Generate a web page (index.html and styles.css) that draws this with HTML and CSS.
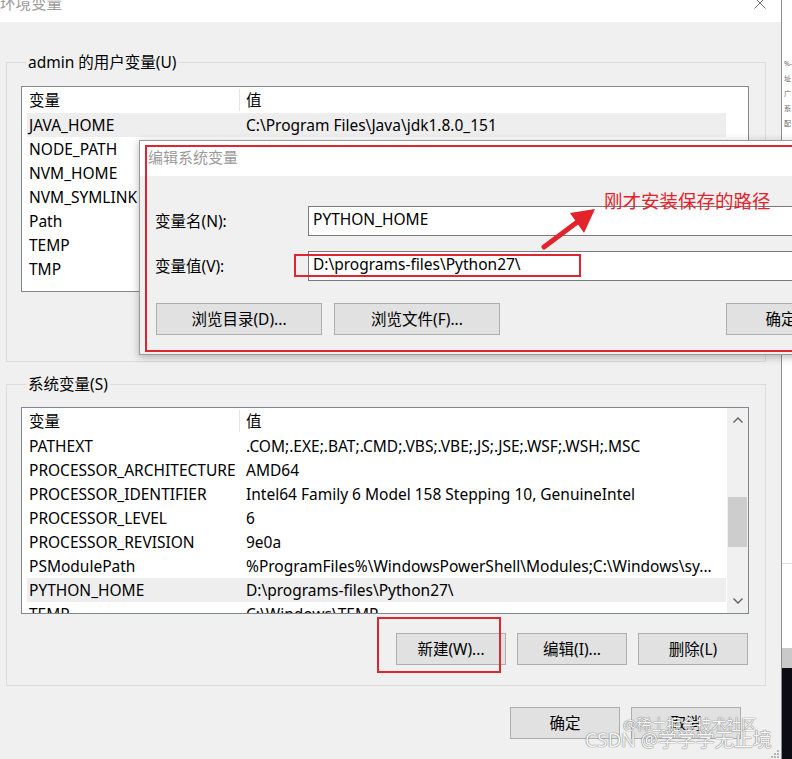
FILE: index.html
```html
<!DOCTYPE html>
<html lang="zh-CN">
<head>
<meta charset="utf-8">
<title>环境变量</title>
<link rel="stylesheet" href="styles.css">
</head>
<body>
<div class="screen">
  <div class="envwin">
    <div class="titlebar">
      <span class="title">环境变量</span>
      <svg class="close" width="12" height="12" viewBox="0 0 12 12"><path d="M0.5 0.5 L11.5 11.5 M11.5 0.5 L0.5 11.5" stroke="#6e6e6e" stroke-width="1" fill="none"/></svg>
    </div>
    <div class="winbody">
      <div class="group group-user">
        <div class="group-label">admin 的用户变量(U)</div>
        <div class="list list-user">
          <div class="cols">
            <div class="row head"><span class="h1">变量</span><span class="h2">值</span></div>
            <div class="row hl"><span class="c1">JAVA_HOME</span><span class="c2">C:\Program Files\Java\jdk1.8.0_151</span></div>
            <div class="row"><span class="c1">NODE_PATH</span><span class="c2">D:\nvm\nodejs\node_global\node_modules</span></div>
            <div class="row"><span class="c1">NVM_HOME</span><span class="c2">D:\nvm</span></div>
            <div class="row"><span class="c1">NVM_SYMLINK</span><span class="c2">D:\nvm\nodejs</span></div>
            <div class="row"><span class="c1">Path</span><span class="c2">%USERPROFILE%\AppData\Local\Microsoft\WindowsApps;</span></div>
            <div class="row"><span class="c1">TEMP</span><span class="c2">%USERPROFILE%\AppData\Local\Temp</span></div>
            <div class="row"><span class="c1">TMP</span><span class="c2">%USERPROFILE%\AppData\Local\Temp</span></div>
          </div>
        </div>
      </div>

      <div class="group group-sys">
        <div class="group-label">系统变量(S)</div>
        <div class="list list-sys">
          <div class="cols">
            <div class="row head"><span class="h1">变量</span><span class="h2">值</span></div>
            <div class="row"><span class="c1">PATHEXT</span><span class="c2">.COM;.EXE;.BAT;.CMD;.VBS;.VBE;.JS;.JSE;.WSF;.WSH;.MSC</span></div>
            <div class="row"><span class="c1">PROCESSOR_ARCHITECTURE</span><span class="c2">AMD64</span></div>
            <div class="row"><span class="c1">PROCESSOR_IDENTIFIER</span><span class="c2">Intel64 Family 6 Model 158 Stepping 10, GenuineIntel</span></div>
            <div class="row"><span class="c1">PROCESSOR_LEVEL</span><span class="c2">6</span></div>
            <div class="row"><span class="c1">PROCESSOR_REVISION</span><span class="c2">9e0a</span></div>
            <div class="row"><span class="c1">PSModulePath</span><span class="c2">%ProgramFiles%\WindowsPowerShell\Modules;C:\Windows\sy...</span></div>
            <div class="row hl"><span class="c1">PYTHON_HOME</span><span class="c2">D:\programs-files\Python27\</span></div>
            <div class="row"><span class="c1">TEMP</span><span class="c2">C:\Windows\TEMP</span></div>
          </div>
          <div class="scrollbar">
            <div class="sb-btn"><svg width="12" height="8" viewBox="0 0 12 8"><path d="M1.5 6.5 L6 2 L10.5 6.5" stroke="#606060" stroke-width="1.4" fill="none"/></svg></div>
            <div class="sb-track"><div class="sb-thumb"></div></div>
            <div class="sb-btn"><svg width="12" height="8" viewBox="0 0 12 8"><path d="M1.5 1.5 L6 6 L10.5 1.5" stroke="#606060" stroke-width="1.4" fill="none"/></svg></div>
          </div>
        </div>
        <div class="btnrow">
          <button class="btn">新建(W)...</button>
          <button class="btn">编辑(I)...</button>
          <button class="btn">删除(L)</button>
        </div>
      </div>

      <div class="btnrow bottomrow">
        <button class="btn">确定</button>
        <button class="btn">取消</button>
      </div>
    </div>
  </div>

  <div class="desk">
    <div class="desk-top">
      <span class="tiny">%-</span>
      <span class="tiny">址</span>
      <span class="tiny">广</span>
      <span class="tiny">系</span>
      <span class="tiny">配</span>
    </div>
    <div class="desk-line"></div>
    <div class="desk-mid"></div>
    <div class="desk-band"></div>
    <div class="desk-dark"></div>
  </div>

  <div class="editdlg">
    <div class="dlg-title">编辑系统变量</div>
    <div class="dlg-body">
      <div class="dlg-grid">
        <label class="dlg-label">变量名(N):</label>
        <div class="dlg-input">PYTHON_HOME</div>
        <label class="dlg-label">变量值(V):</label>
        <div class="dlg-input">D:\programs-files\Python27\</div>
      </div>
      <div class="dlg-btns">
        <button class="btn wide">浏览目录(D)...</button>
        <button class="btn wide">浏览文件(F)...</button>
        <span class="spacer"></span>
        <button class="btn">确定</button>
        <button class="btn">取消</button>
      </div>
    </div>
  </div>

  <div class="mark mark-dlg"></div>
  <div class="mark mark-value"></div>
  <div class="mark mark-new"></div>
  <div class="note">刚才安装保存的路径</div>
  <svg class="arrow" width="80" height="70" viewBox="0 0 80 70">
    <path d="M14 52 L50 25" stroke="#e3232c" stroke-width="5" stroke-linecap="round" fill="none"/>
    <polygon points="65,14 40,18 54,38" fill="#e3232c"/>
  </svg>

  <div class="watermark wm1">@稀土掘金技术社区</div>
  <div class="watermark wm2">CSDN @学学学无止境</div>
  <svg class="grip" width="10" height="10" viewBox="0 0 10 10">
    <rect x="7" y="1" width="2" height="2" fill="#b5b5b5"/>
    <rect x="4" y="4" width="2" height="2" fill="#b5b5b5"/>
    <rect x="7" y="4" width="2" height="2" fill="#b5b5b5"/>
    <rect x="1" y="7" width="2" height="2" fill="#b5b5b5"/>
    <rect x="4" y="7" width="2" height="2" fill="#b5b5b5"/>
    <rect x="7" y="7" width="2" height="2" fill="#b5b5b5"/>
  </svg>
</div>
</body>
</html>
```

FILE: styles.css
```css
* { box-sizing: border-box; }
html, body { margin: 0; padding: 0; }
body {
  width: 792px;
  height: 759px;
  overflow: hidden;
  background: #fff;
  font-family: "Noto Sans", "Noto Sans CJK SC", sans-serif;
  font-size: 15.5px;
  color: #000;
}
.screen {
  position: relative;
  display: flex;
  width: 792px;
  height: 759px;
  overflow: hidden;
}

/* main window */
.envwin {
  width: 782px;
  height: 759px;
  flex: none;
  display: flex;
  flex-direction: column;
  background: #f0f0f0;
  border-right: 1px solid #8e8e8e;
}
.titlebar {
  height: 22px;
  flex: none;
  background: #fff;
  display: flex;
  justify-content: space-between;
  align-items: flex-start;
}
.title {
  color: #9b9b9b;
  line-height: 20px;
  margin-top: -7px;
}
.close { margin-top: -3px; margin-right: 15px; }

.winbody {
  flex: 1;
  padding: 40px 0 0 6px;
}
.group {
  width: 760px;
  border: 1px solid #dcdcdc;
  padding: 0 16px 0 14px;
}
.group-label {
  display: table;
  margin: -11px 0 0 5px;
  padding: 0 2px;
  line-height: 20px;
  background: #f0f0f0;
}
.group-user { padding-bottom: 69px; }
.group-sys { margin-top: 22px; padding-bottom: 20px; }

.list {
  display: flex;
  background: #fff;
  border: 1px solid #828790;
  overflow: hidden;
}
.list-user { margin-top: 14px; height: 206px; }
.list-sys { margin-top: 13px; height: 207px; }
.cols { flex: 1; min-width: 0; }
.row {
  display: grid;
  grid-template-columns: 219px 1fr;
  margin-left: 5px;
  width: 699px;
  height: 24px;
  line-height: 25px;
  white-space: nowrap;
}
.row.head {
  grid-template-columns: 213px 1fr;
  height: 26px;
  line-height: 26px;
}
.h1 { padding-left: 2px; border-right: 1px solid #e5e5e5; margin: 2px 0; line-height: 22px; }
.h2 { padding-left: 6px; }
.c1 { padding-left: 2px; overflow: hidden; }
.c2 { overflow: hidden; }
.row.hl { background: #eeeeee; }

.scrollbar {
  width: 21px;
  flex: none;
  background: #f0f0f0;
  display: flex;
  flex-direction: column;
}
.sb-btn {
  height: 24px;
  display: flex;
  align-items: center;
  justify-content: center;
}
.sb-track { flex: 1; padding: 0 1px; }
.sb-thumb { margin-top: 65px; height: 50px; background: #cdcdcd; }

.btnrow {
  display: flex;
  justify-content: flex-end;
  gap: 11px;
  margin-top: 19px;
  padding-right: 1px;
}
.bottomrow { margin-top: 21px; padding-right: 40px; }
.btn {
  width: 110px;
  height: 32px;
  flex: none;
  background: #e1e1e1;
  border: 1px solid #adadad;
  font: inherit;
  color: #000;
  padding: 0;
  line-height: 30px;
}
.btn.wide { width: 166px; }

/* desktop strip at right */
.desk {
  flex: 1;
  display: flex;
  flex-direction: column;
  background: #fff;
}
.desk-top {
  height: 563px;
  padding-top: 58px;
  display: flex;
  flex-direction: column;
  gap: 4px;
}
.tiny { font-size: 7px; line-height: 11px; color: #666; padding-left: 2px; }
.desk-line { height: 1px; background: #e0e0e0; }
.desk-mid { height: 84px; background: #fff; }
.desk-band { height: 20px; background: #c9c9c9; }
.desk-dark { flex: 1; background: #0c0c14; }

/* edit dialog (floats over main window) */
.editdlg {
  position: absolute;
  left: 139px;
  top: 140px;
  width: 836px;
  height: 215px;
  border: 1px solid #9a9a9a;
  background: #f0f0f0;
  box-shadow: 0 2px 8px rgba(0,0,0,0.28);
  display: flex;
  flex-direction: column;
}
.dlg-title {
  height: 35px;
  flex: none;
  background: #fff;
  color: #9b9b9b;
  font-size: 15px;
  padding: 6px 0 0 8px;
  line-height: 20px;
}
.dlg-body { padding: 30px 16px 0 16px; }
.dlg-grid {
  display: grid;
  grid-template-columns: 152px 650px;
  row-gap: 15px;
  align-items: center;
}
.dlg-label { margin-left: -1px; line-height: 26px; }
.dlg-input {
  height: 30px;
  background: #fff;
  border: 1px solid #7a7a7a;
  padding-left: 4px;
  line-height: 25px;
  white-space: nowrap;
}
.dlg-btns {
  display: flex;
  gap: 12px;
  margin-top: 22px;
}
.spacer { flex: 1; }

/* annotations */
.mark { position: absolute; border: 2px solid #dd2630; }
.mark-dlg { left: 145px; top: 145px; width: 700px; height: 207px; }
.mark-value { left: 294px; top: 254px; width: 287px; height: 23px; }
.mark-new { left: 377px; top: 617px; width: 124px; height: 56px; }
.note {
  position: absolute;
  left: 604px;
  top: 190px;
  font-size: 18.5px;
  line-height: 22px;
  color: #e3232c;
  white-space: nowrap;
}
.arrow { position: absolute; left: 530px; top: 195px; }

.watermark {
  position: absolute;
  white-space: nowrap;
  color: #f6f6f6;
  text-shadow: 0 0 1px #6f6f6f, 0 0 1px #6f6f6f;
}
.wm1 { left: 623px; top: 714px; font-size: 15px; line-height: 20px; }
.wm2 { left: 585px; top: 728px; font-size: 19px; line-height: 24px; }
.grip { position: absolute; left: 770px; top: 749px; }
```
